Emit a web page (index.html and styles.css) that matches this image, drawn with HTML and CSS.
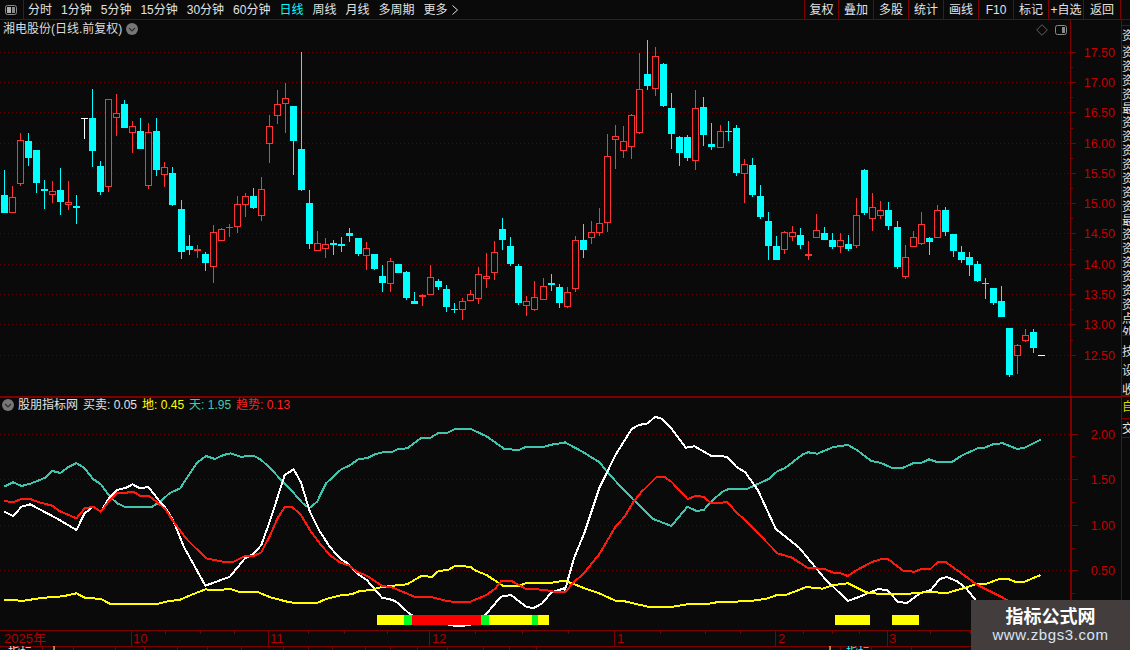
FILE: index.html
```html
<!DOCTYPE html>
<html lang="zh">
<head>
<meta charset="utf-8">
<title>湘电股份</title>
<link rel="stylesheet" href="styles.css">
</head>
<body>
<div class="app">
  <header class="toolbar">
    <div class="corner"><svg class="panel-icon" viewBox="0 0 12 10"><rect x="0.5" y="0.5" width="11" height="9" rx="2" class="panel-frame"/><rect x="2" y="2" width="4" height="6" class="panel-fill-light"/><rect x="7" y="2" width="3" height="6" class="panel-fill"/></svg></div>
    <nav class="periods">
      <span>分时</span><span>1分钟</span><span>5分钟</span><span>15分钟</span><span>30分钟</span><span>60分钟</span><span class="active">日线</span><span>周线</span><span>月线</span><span>多周期</span><span class="more">更多<svg class="more-mark" viewBox="0 0 6 10"><path d="M.5 .5 L5.5 5 L.5 9.5"/></svg></span>
    </nav>
    <nav class="tools">
      <span class="tool first">复权</span><span class="tool">叠加</span><span class="tool">多股</span><span class="tool">统计</span><span class="tool">画线</span><span class="tool">F10</span><span class="tool">标记</span><span class="tool">+自选</span><span class="tool last">返回</span>
    </nav>
  </header>
  <div class="workspace">
    <main class="charts">
      <section class="pane pane-main">
        <div class="pane-title">
          <span class="stock">湘电股份(日线.前复权)</span>
          <svg class="toggle" viewBox="0 0 12 12"><circle cx="6" cy="6" r="6" class="toggle-bg"/><path d="M3 5 L6 8 L9 5" class="toggle-mark"/></svg>
        </div>
        <div class="pane-icons">
          <svg class="diamond" viewBox="0 0 12 12"><path d="M6 .7 L11.3 6 L6 11.3 L.7 6 Z"/></svg>
          <svg class="panel-icon" viewBox="0 0 12 10"><rect x="0.5" y="0.5" width="11" height="9" rx="2" class="panel-frame"/><rect x="7" y="2" width="3" height="6" class="panel-fill"/></svg>
        </div>
        <svg class="plot" viewBox="0 20 1121 376" width="1121" height="376">
          <path class="grid" d="M0 52.5H1070M0 82.5H1070M0 112.5H1070M0 143.5H1070M0 173.5H1070M0 203.5H1070M0 233.5H1070M0 264.5H1070M0 294.5H1070M0 324.5H1070M0 355.5H1070"/>
          <g id="candles"></g>
          <path class="axis" d="M1070.5 20V396"/>
          <path class="axis" d="M1070 52.5h6M1070 82.5h6M1070 112.5h6M1070 143.5h6M1070 173.5h6M1070 203.5h6M1070 233.5h6M1070 264.5h6M1070 294.5h6M1070 324.5h6M1070 355.5h6M1070 67.5h3M1070 97.5h3M1070 128.5h3M1070 158.5h3M1070 188.5h3M1070 218.5h3M1070 249.5h3M1070 279.5h3M1070 309.5h3M1070 340.5h3"/>
          <g class="scale">
            <text x="1115" y="57">17.50</text><text x="1115" y="87">17.00</text><text x="1115" y="117">16.50</text><text x="1115" y="148">16.00</text><text x="1115" y="178">15.50</text><text x="1115" y="208">15.00</text><text x="1115" y="238">14.50</text><text x="1115" y="269">14.00</text><text x="1115" y="299">13.50</text><text x="1115" y="329">13.00</text><text x="1115" y="360">12.50</text>
          </g>
        </svg>
      </section>
      <section class="pane pane-sub">
        <div class="pane-title sub-title">
          <svg class="toggle" viewBox="0 0 12 12"><circle cx="6" cy="6" r="6" class="toggle-bg"/><path d="M3 5 L6 8 L9 5" class="toggle-mark"/></svg>
          <span class="ind-name">股朋指标网</span>
          <span class="ind">买卖: 0.05</span>
          <span class="ind ind-yellow">地: 0.45</span>
          <span class="ind ind-teal">天: 1.95</span>
          <span class="ind ind-red">趋势: 0.13</span>
        </div>
        <svg class="plot" viewBox="0 398 1121 232" width="1121" height="232">
          <path class="grid" d="M0 434.5H1070M0 479.5H1070M0 525.5H1070M0 570.5H1070"/>
          <polyline id="teal" class="line line-teal"/>
          <polyline id="white" class="line line-white"/>
          <polyline id="yellow" class="line line-yellow"/>
          <polyline id="red" class="line line-red"/>
          <g id="bars"></g>
          <path class="axis axis-heavy" d="M1071 398V630"/>
          <path class="axis" d="M1072 434.5h6M1072 479.5h6M1072 525.5h6M1072 570.5h6M1072 456.5h3M1072 502.5h3M1072 548.5h3M1072 593.5h3"/>
          <g class="scale">
            <text x="1115" y="439">2.00</text><text x="1115" y="484">1.50</text><text x="1115" y="530">1.00</text><text x="1115" y="575">0.50</text>
          </g>
        </svg>
      </section>
      <svg class="dates" viewBox="0 630 1121 20" width="1121" height="20">
        <path class="axis" d="M0 630.5H1121M0 646.5H1121"/>
        <path class="axis" d="M131.5 630V646M268.5 630V646M429.5 630V646M614.5 630V646M775.5 630V646M887.5 630V646"/>
        <path class="axis" d="M165.5 630v4M200.5 630v4M234.5 630v4M308.5 630v4M344.5 630v4M387.5 630v4M475.5 630v4M522.5 630v4M568.5 630v4M660.5 630v4M705.5 630v4M740.5 630v4M803.5 630v4M832.5 630v4M859.5 630v4M930.5 630v4M970.5 630v4M1010.5 630v4"/>
        <path class="axis" d="M42.5 646v4M73.5 646v4M115.5 646v4M144.5 646v4M177.5 646v4M207.5 646v4M241.5 646v4M283.5 646v4M308.5 646v4M332.5 646v4M365.5 646v4M390.5 646v4M417.5 646v4M447.5 646v4M483.5 646v4M509.5 646v4M536.5 646v4M840.5 646v4M871.5 646v4M911.5 646v4"/>
        <g class="datelabels">
          <text x="4" y="643">2025年</text><text x="133" y="643">10</text><text x="270" y="643">11</text><text x="432" y="643">12</text><text x="617" y="643">1</text><text x="778" y="643">2</text><text x="889" y="643">3</text>
        </g>
        <g class="tabs">
          <text x="8" y="657">指标</text><text x="48" y="657">十</text><text x="824" y="657">十</text><text class="tab-on" x="846" y="657">指标</text>
        </g>
      </svg>
    </main>
    <aside class="side">
      <div class="side-top">资</div>
      <div class="side-list">
        <span>资</span><span>资</span><span>资</span><span>资</span><span>最</span><span>资</span><span>资</span><span>资</span><span>资</span><span>资</span><span>资</span><span>资</span><span>最</span><span>资</span><span>资</span><span>资</span><span>资</span><span>资</span><span>资</span><span>点</span><span>外</span>
      </div>
      <div class="side-list side-low"><span>技</span><span>设</span><span>收</span></div>
      <div class="side-cell side-yellow">自</div>
      <div class="side-cell">交</div>
    </aside>
  </div>
  <div class="watermark">
    <div class="wm-title">指标公式网</div>
    <div class="wm-url">www.zbgs3.com</div>
  </div>
</div>
<script src="chart.js"></script>
</body>
</html>
```
FILE: styles.css
```css
* { box-sizing: border-box; }
html, body { margin: 0; padding: 0; background: #0a0a0a; }
.app {
  position: relative;
  width: 1130px;
  height: 650px;
  display: flex;
  flex-direction: column;
  overflow: hidden;
  background: #0a0a0a;
  color: #e2e2e2;
  font: 12px/1 "Liberation Sans", "Noto Sans CJK SC", sans-serif;
}
.toolbar {
  flex: 0 0 20px;
  display: flex;
  align-items: stretch;
  border-bottom: 1px solid #800000;
}
.corner {
  width: 24px;
  border-right: 1px solid #800000;
  display: flex;
  align-items: center;
  justify-content: center;
}
.corner .panel-icon { margin-right: 1px; }
.periods {
  display: flex;
  align-items: center;
  gap: 9px;
  padding-left: 4px;
  white-space: nowrap;
}
.periods .active { color: #00ffff; }
.more { display: flex; align-items: center; gap: 4px; }
.more-mark { width: 6px; height: 10px; fill: none; stroke: #e2e2e2; }
.tools {
  margin-left: auto;
  display: flex;
  margin-right: 9px;
}
.tool {
  width: 35px;
  border-left: 1px solid #800000;
  display: flex;
  align-items: center;
  justify-content: center;
  white-space: nowrap;
}
.tool.first { width: 34px; }
.tool.last { width: 38px; border-right: 1px solid #800000; }
.panel-icon { width: 12px; height: 10px; }
.panel-frame { fill: none; stroke: #8a8a8a; }
.panel-fill { fill: #8a8a8a; }
.panel-fill-light { fill: #b0b0b0; }
.workspace { flex: 1; display: flex; min-height: 0; }
.charts {
  width: 1122px;
  border-right: 1px solid #800000;
  display: flex;
  flex-direction: column;
}
.pane { position: relative; }
.pane-main { height: 378px; border-bottom: 2px solid #800000; }
.pane-sub { height: 232px; }
.plot, .dates { display: block; }
.pane-title {
  position: absolute;
  left: 3px;
  top: 3px;
  display: flex;
  align-items: center;
  gap: 4px;
  white-space: nowrap;
  z-index: 2;
}
.sub-title { left: 2px; top: 1px; gap: 5px; }
.sub-title .toggle { margin-right: -1px; }
.toggle { width: 12px; height: 12px; }
.toggle-bg { fill: #777; }
.toggle-mark { fill: none; stroke: #2e2e2e; stroke-width: 1.2; }
.stock { color: #dcdcdc; }
.ind-name { color: #e2e2e2; }
.ind { color: #e2e2e2; }
.ind-yellow { color: #ffff00; }
.ind-teal { color: #45c8b2; }
.ind-red { color: #ff2020; }
.pane-icons {
  position: absolute;
  left: 1036px;
  top: 4px;
  display: flex;
  align-items: center;
  gap: 7px;
  z-index: 2;
}
.diamond { width: 12px; height: 12px; }
.diamond path { fill: none; stroke: #606060; }
.grid { fill: none; stroke: #5c0000; stroke-dasharray: 1 3; shape-rendering: crispEdges; }
.axis { fill: none; stroke: #800000; shape-rendering: crispEdges; }
.axis-heavy { stroke-width: 2; }
.scale text { fill: #c40000; font-size: 12.5px; text-anchor: end; }
.datelabels text { fill: #b00000; font-size: 13px; }
.tabs text { fill: #e2e2e2; font-size: 12px; }
.tabs .tab-on { fill: #00ffff; }
.line { fill: none; stroke-linejoin: round; shape-rendering: crispEdges; }
.line-teal { stroke: #40c4ae; stroke-width: 2; }
.line-white { stroke: #ffffff; stroke-width: 2; }
.line-yellow { stroke: #ffff00; stroke-width: 2; }
.line-red { stroke: #ff1a10; stroke-width: 2; }
.bar-yellow { fill: #ffff00; }
.bar-green { fill: #00ff20; }
.bar-red { fill: #ff0000; }
.c-cyan { fill: #00ffff; shape-rendering: crispEdges; }
.c-red { fill: #ff3333; shape-rendering: crispEdges; }
.c-white { fill: #ffffff; shape-rendering: crispEdges; }
.c-hollow { fill: #0a0a0a; stroke: #ff3333; shape-rendering: crispEdges; }
.side {
  width: 8px;
  display: flex;
  flex-direction: column;
  overflow: hidden;
  padding-top: 5px;
  font-size: 12px;
  color: #e2e2e2;
}
.side-top {
  height: 21px;
  border-top: 1px solid #800000;
  border-bottom: 1px solid #800000;
  padding-top: 4px;
  white-space: nowrap;
}
.side-list {
  display: flex;
  flex-direction: column;
  flex: 0 0 290px;
  overflow: hidden;
  border-bottom: 1px solid #800000;
}
.side-list span { flex: 0 0 14px; line-height: 14px; }
.side-low { flex-basis: 61px; padding-top: 7px; border-bottom: 2px solid #800000; }
.side-low span { flex-basis: 19px; line-height: 19px; }
.side-cell {
  height: 19px;
  border-bottom: 1px solid #800000;
  line-height: 18px;
  padding-top: 1px;
}
.side-yellow { color: #d8d800; height: 22px; }
.watermark {
  position: absolute;
  left: 971px;
  top: 600px;
  width: 159px;
  height: 50px;
  background: #433e3d;
  text-align: center;
  z-index: 5;
}
.wm-title {
  margin-top: 5px;
  font: bold 18px/20px "Noto Sans CJK SC", sans-serif;
  color: #ffffff;
}
.wm-url {
  margin-top: 1px;
  font: 15px/18px "Liberation Sans", sans-serif;
  color: #d8e6f6;
  letter-spacing: .6px;
}
```
FILE: chart.js
```js
var NS = 'http://www.w3.org/2000/svg';
// rows: zoomX, wickTop, bodyTop, bodyBottom, wickBottom, type
var groups = [
  { ox: 0, oy: 80, rows: [
    [13,270,345,398,398,'c'],[37,318,352,398,398,'r'],[61,159,181,311,318,'r'],[85,159,183,234,258,'c'],
    [109,210,210,309,339,'c'],[133,300,327,333,387,'c'],[157,303,334,344,369,'r'],[181,264,330,366,405,'c'],
    [205,303,367,374,390,'r'],[229,345,378,384,432,'c'],[253,115,115,118,177,'w'],[277,27,114,213,261,'c'],
    [301,243,258,336,345,'c'],[325,57,57,320,336,'r'],[349,42,99,113,168,'r'],[373,60,72,144,144,'c'],
    [397,123,139,158,219,'r'],[421,114,153,207,207,'c'],[445,129,157,317,327,'r'],[469,114,153,270,288,'c'],
    [493,246,262,284,321,'r'],[517,261,279,375,378,'c'],[544,360,387,516,537,'c'],[568,465,498,510,525,'c'],
    [592,495,507,512,534,'f'],[616,516,522,549,573,'c'],[640,435,457,560,609,'r'],[664,444,448,482,482,'r'],
    [688,432,441,444,471,'f'],[712,348,373,440,459,'r'],[736,339,349,374,411,'r'],[760,324,348,384,387,'c'],
    [784,291,328,407,423,'r'],[808,105,139,191,249,'r'],[832,30,73,107,132,'r'],[856,9,55,71,159,'r'],
    [880,78,78,183,285,'c'],[904,-84,207,330,333,'c'],[928,330,369,492,507,'c'],[952,453,490,512,513,'r'],
    [976,474,493,506,534,'r']
  ]},
  { ox: 330, oy: 200, rows: [
    [10,120,130,134,165,'c'],[34,111,132,137,156,'c'],[58,84,99,108,126,'c'],[85,114,114,162,168,'c'],
    [109,126,145,167,210,'r'],[133,162,162,207,209,'c'],[157,195,228,249,276,'c'],[181,174,184,251,276,'r'],
    [205,192,192,219,219,'c'],[229,213,216,294,300,'c'],[253,276,303,312,312,'c'],[277,282,285,290,318,'f'],
    [301,195,232,284,285,'r'],[325,237,243,261,270,'c'],[349,255,267,321,336,'c'],[373,309,326,329,339,'c'],
    [397,294,304,329,360,'r'],[421,270,283,302,302,'r'],[445,201,223,296,312,'r'],[469,159,229,236,264,'r'],
    [493,123,157,218,240,'r'],[517,54,87,120,150,'c'],[541,111,138,192,198,'c'],[565,192,198,309,315,'c'],
    [589,288,304,317,348,'r'],[613,243,292,329,333,'r'],[640,234,259,299,299,'r'],[664,222,249,255,273,'c'],
    [688,252,261,309,324,'c'],[712,261,277,320,324,'r'],[736,108,121,266,276,'r'],[760,72,120,150,174,'c'],
    [784,63,97,113,132,'r'],[808,24,70,98,108,'r']
  ]},
  { ox: 570, oy: 30, rows: [
    [112,312,379,578,606,'r'],[136,285,319,329,417,'r'],[160,288,334,362,384,'r'],[184,252,256,350,387,'r'],
    [208,69,178,308,312,'r'],[232,30,132,168,180,'c'],[256,51,79,176,198,'r'],[280,99,102,228,231,'c'],
    [304,189,234,312,357,'c'],[328,318,321,369,408,'c'],[352,315,321,384,393,'c'],[376,180,235,392,420,'r'],
    [400,201,231,315,348,'c'],[424,279,342,351,360,'c'],[451,285,304,353,353,'r'],[475,273,303,306,333,'c'],
    [499,285,294,429,438,'c'],[523,387,403,431,519,'r'],[547,384,405,495,501,'c'],[571,465,498,561,567,'c'],
    [595,546,573,648,690,'c'],[619,618,648,690,690,'c'],[643,603,607,659,672,'r'],[667,588,607,620,633,'r'],
    [691,594,615,645,657,'c'],[715,633,672,678,690,'f'],[739,552,601,623,623,'r'],[763,591,609,630,630,'c'],
    [787,609,630,651,657,'c'],[811,609,631,650,669,'r'],[835,615,642,657,663,'c'],[859,504,556,647,654,'r'],
    [883,417,420,549,555,'c']
  ]},
  { ox: 760, oy: 160, rows: [
    [337,99,142,176,213,'r'],[361,123,151,167,177,'r'],[385,126,150,198,210,'c'],[412,183,201,321,327,'c'],
    [436,255,292,350,357,'r'],[460,213,232,260,260,'r'],[484,156,193,251,255,'r'],[508,231,234,246,285,'c'],
    [532,135,151,233,233,'r'],[556,141,150,216,228,'c'],[580,222,222,273,291,'c'],[604,258,276,300,309,'c'],
    [628,276,291,315,348,'c'],[652,303,312,363,366,'c'],[676,354,369,372,417,'c'],[700,384,384,429,435,'c'],
    [724,378,423,471,471,'c'],[748,504,504,645,651,'c'],[772,552,556,587,642,'r'],[796,507,526,542,546,'r'],
    [820,507,516,564,579,'c'],[843,585,585,588,588,'w']
  ]}
];

function el(tag, cls, attrs, parent) {
  var n = document.createElementNS(NS, tag);
  n.setAttribute('class', cls);
  for (var k in attrs) n.setAttribute(k, attrs[k]);
  parent.appendChild(n);
  return n;
}

var cg = document.getElementById('candles');
groups.forEach(function (g) {
  g.rows.forEach(function (r) {
    var col = Math.floor(g.ox + r[0] / 3);
    var wt = Math.round(g.oy + r[1] / 3), bt = Math.round(g.oy + r[2] / 3);
    var bb = Math.round(g.oy + r[3] / 3), wb = Math.round(g.oy + r[4] / 3);
    var t = r[5];
    var solid = t === 'c' ? 'c-cyan' : t === 'w' ? 'c-white' : 'c-red';
    if (bt > wt) el('rect', solid, { x: col, y: wt, width: 1, height: bt - wt }, cg);
    if (wb > bb) el('rect', solid, { x: col, y: bb, width: 1, height: wb - bb }, cg);
    if (t === 'r') {
      el('rect', 'c-hollow', { x: col - 2.5, y: bt + 0.5, width: 6, height: Math.max(1, bb - bt - 1) }, cg);
    } else {
      el('rect', solid, { x: col - 3, y: bt, width: 7, height: Math.max(1, bb - bt) }, cg);
    }
  });
});

function pts(left, right) {
  var out = [];
  left.forEach(function (p) { out.push((p[0] / 2.775).toFixed(1) + ',' + (405 + p[1] / 3).toFixed(1)); });
  right.forEach(function (p) { out.push((565 + p[0] / 2.775).toFixed(1) + ',' + (405 + p[1] / 3).toFixed(1)); });
  return out.join(' ');
}

var series = {
  teal: [
    [[12,245],[36,232],[60,243],[84,236],[108,226],[125,218],[145,198],[168,204],[190,186],[212,174],[235,190],[258,222],[280,238],[305,275],[325,295],[348,306],[372,306],[420,306],[445,290],[470,265],[500,250],[525,208],[548,172],[572,153],[596,162],[620,150],[640,145],[668,155],[705,153],[725,165],[750,190],[780,225],[810,258],[840,295],[858,310],[880,290],[905,235],[948,192],[970,182],[995,162],[1018,160],[1040,148],[1065,141],[1090,140],[1105,132],[1130,130],[1170,98],[1195,98],[1218,83],[1242,83],[1264,71],[1305,71],[1350,94],[1400,132],[1440,135],[1460,125],[1510,125],[1535,118],[1566,113]],
    [[0,112],[48,140],[96,172],[120,205],[190,285],[245,342],[295,363],[340,305],[365,318],[385,315],[410,285],[440,258],[455,252],[505,252],[565,222],[590,198],[610,190],[660,148],[675,142],[700,146],[745,126],[785,120],[810,135],[850,168],[875,173],[910,190],[935,190],[970,173],[990,173],[1010,163],[1030,170],[1075,170],[1100,152],[1145,130],[1165,128],[1190,117],[1215,115],[1255,132],[1275,128],[1320,104]]
  ],
  red: [
    [[12,288],[36,292],[60,282],[84,282],[108,292],[145,302],[165,318],[212,340],[235,310],[258,305],[280,320],[305,285],[325,265],[350,263],[370,260],[388,272],[412,272],[440,295],[460,315],[480,348],[520,405],[572,460],[620,470],[648,470],[680,453],[705,452],[725,442],[750,390],[770,340],[790,307],[812,307],[835,330],[860,375],[885,412],[915,450],[945,473],[970,482],[990,500],[1018,512],[1060,542],[1090,548],[1150,575],[1195,576],[1240,588],[1270,592],[1305,590],[1350,570],[1375,550],[1392,527],[1418,527],[1440,540],[1460,552],[1510,554],[1545,562],[1566,561]],
    [[0,562],[25,530],[50,508],[95,448],[140,365],[165,335],[190,290],[210,263],[255,215],[275,215],[295,230],[340,282],[365,272],[385,276],[405,294],[430,294],[450,290],[475,322],[500,345],[545,395],[590,445],[630,458],[672,488],[720,492],[745,503],[765,505],[785,513],[810,495],[850,472],[880,461],[895,461],[940,498],[970,500],[990,491],[1015,491],[1035,470],[1055,470],[1100,505],[1145,540],[1185,562],[1240,592]]
  ],
  white: [
    [[12,320],[36,333],[60,305],[84,298],[108,312],[145,333],[165,345],[212,375],[235,325],[258,305],[280,320],[305,275],[325,255],[350,248],[368,238],[388,250],[412,246],[440,285],[460,310],[480,345],[510,425],[570,542],[638,515],[680,460],[705,445],[725,420],[750,345],[790,210],[815,193],[835,232],[860,320],[885,375],[915,425],[945,462],[965,475],[990,505],[1018,525],[1060,578],[1090,585],[1105,595],[1140,630],[1250,660],[1270,664],[1305,660],[1345,632],[1390,575],[1418,570],[1460,605],[1480,610],[1505,595],[1530,562],[1566,550]],
    [[0,555],[25,460],[55,380],[95,250],[140,150],[185,72],[205,60],[230,55],[250,35],[270,42],[295,70],[335,128],[360,124],[405,152],[450,155],[475,185],[500,202],[535,255],[585,372],[650,428],[720,520],[785,588],[810,578],[870,552],[895,556],[925,592],[950,593],[985,565],[1015,555],[1040,522],[1060,516],[1090,530],[1115,552],[1150,600]]
  ],
  yellow: [
    [[12,584],[36,584],[60,588],[84,584],[108,580],[145,576],[175,574],[212,565],[235,578],[280,582],[305,596],[440,596],[460,590],[500,584],[530,570],[570,553],[590,556],[640,552],[665,561],[715,561],[750,577],[800,591],[820,594],[880,594],[905,582],[950,570],[975,568],[1000,557],[1030,556],[1050,548],[1090,542],[1130,538],[1170,512],[1198,516],[1218,497],[1242,496],[1262,483],[1305,485],[1320,497],[1350,510],[1395,542],[1440,542],[1462,534],[1530,533],[1566,527]],
    [[0,527],[50,548],[95,565],[140,587],[165,589],[230,605],[300,605],[340,598],[390,598],[430,590],[470,590],[520,587],[560,581],[590,569],[615,569],[670,546],[715,551],[745,540],[785,535],[835,562],[875,567],[945,567],[1010,561],[1060,564],[1105,550],[1145,536],[1170,536],[1205,522],[1230,522],[1250,531],[1275,530],[1320,510]]
  ]
};
Object.keys(series).forEach(function (k) {
  document.getElementById(k).setAttribute('points', pts(series[k][0], series[k][1]));
});

var bars = [
  [377,404,'yellow'],[404,412,'green'],[412,481,'red'],[481,489,'green'],[489,532,'yellow'],[532,538,'green'],[538,549,'yellow'],
  [835,870,'yellow'],[892,919,'yellow']
];
var bg = document.getElementById('bars');
bars.forEach(function (b) {
  el('rect', 'bar-' + b[2], { x: b[0], y: 615, width: b[1] - b[0], height: 10 }, bg);
});
```
